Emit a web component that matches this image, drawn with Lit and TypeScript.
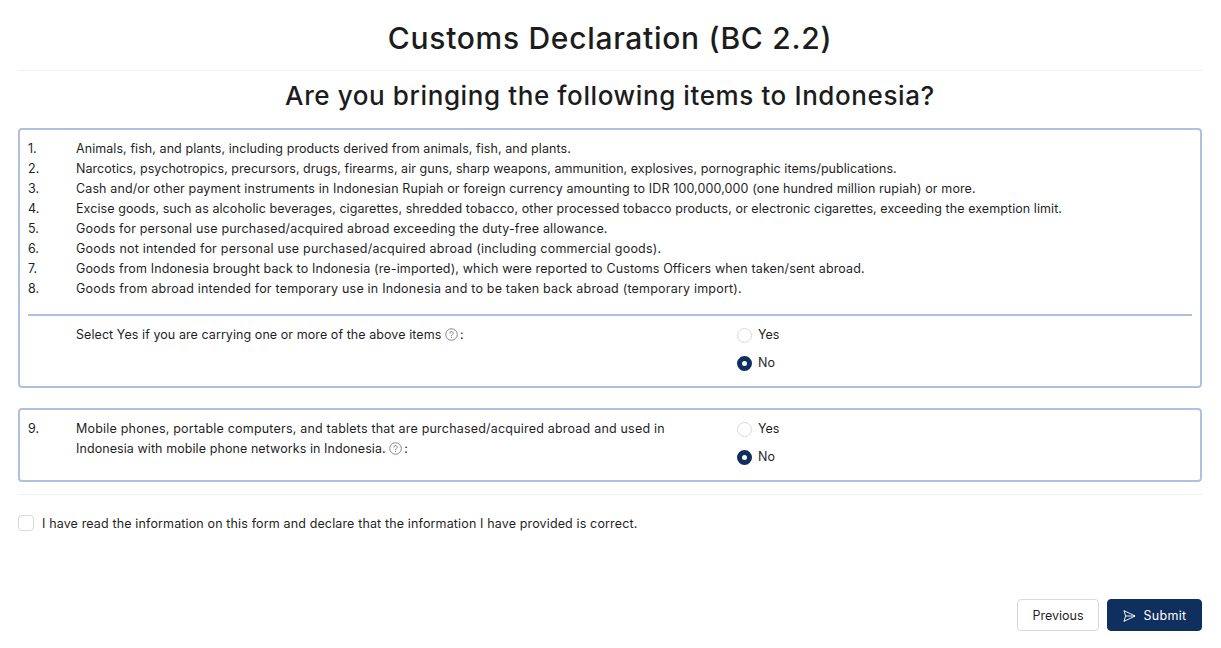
import { LitElement, html, css } from "lit";
import { customElement } from "lit/decorators.js";

const ITEMS: [string, number][] = [
  ["Animals, fish, and plants, including products derived from animals, fish, and plants.", 0.07],
  ["Narcotics, psychotropics, precursors, drugs, firearms, air guns, sharp weapons, ammunition, explosives, pornographic items/publications.", 0.044],
  ["Cash and/or other payment instruments in Indonesian Rupiah or foreign currency amounting to IDR 100,000,000 (one hundred million rupiah) or more.", 0.117],
  ["Excise goods, such as alcoholic beverages, cigarettes, shredded tobacco, other processed tobacco products, or electronic cigarettes, exceeding the exemption limit.", 0.073],
  ["Goods for personal use purchased/acquired abroad exceeding the duty-free allowance.", 0.17],
  ["Goods not intended for personal use purchased/acquired abroad (including commercial goods).", 0.22],
  ["Goods from Indonesia brought back to Indonesia (re-imported), which were reported to Customs Officers when taken/sent abroad.", 0.136],
  ["Goods from abroad intended for temporary use in Indonesia and to be taken back abroad (temporary import).", 0.2],
];

const help = html`<svg class="help" viewBox="0 0 14 14" fill="none" stroke="#7f7f7f" stroke-width="1">
  <circle cx="7" cy="7" r="6.2"></circle>
  <path d="M5.2 5.6a1.8 1.8 0 1 1 2.7 1.5c-.6.4-.9.7-.9 1.4" stroke-linecap="round"></path>
  <circle cx="7" cy="10.2" r=".6" fill="#7f7f7f" stroke="none"></circle>
</svg>`;

const radios = html`<div class="radios">
  <label class="radio"><span class="dot"></span>Yes</label>
  <label class="radio"><span class="dot on"></span>No</label>
</div>`;

@customElement("app-root")
export class AppRoot extends LitElement {
  static styles = css`
    :host {
      display: block;
      font-family: Inter, "Liberation Sans", sans-serif;
      font-size: 12.5px;
      line-height: 20px;
      color: #1f1f1f;
      background: #fff;
    }
    .page {
      display: flex;
      flex-direction: column;
      padding: 0 19px 17px 18px;
      height: 648px;
      box-sizing: border-box;
    }
    h1 {
      margin: 0;
      height: 70px;
      line-height: 76px;
      font-size: 30px;
      font-weight: 500;
      text-align: center;
      letter-spacing: 0.7px;
      color: #1c1c1c;
      border-bottom: 1px solid #f0f0f0;
    }
    h2 {
      margin: 0;
      height: 57px;
      line-height: 49px;
      font-size: 26px;
      font-weight: 500;
      text-align: center;
      letter-spacing: 0.6px;
      color: #1c1c1c;
    }
    .box {
      border: 2px solid #b0c0e0;
      border-radius: 4px;
      padding: 9px 8px 13px;
    }
    .q2 {
      margin-top: 20px;
    }
    .row {
      display: grid;
      grid-template-columns: 48px 1fr;
    }
    .sep {
      border: 0;
      border-top: 2px solid #b0c0e0;
      margin: 15px 0 9px;
    }
    .answer {
      display: grid;
      grid-template-columns: 48px 660px 1fr;
    }
    .select { letter-spacing: 0.07px; }
    .wide { letter-spacing: 0.2px; }
    .tight { letter-spacing: 0.08px; }
    .radios {
      display: flex;
      flex-direction: column;
      gap: 8px;
    }
    .radio {
      display: flex;
      align-items: center;
      gap: 6px;
      height: 20px;
    }
    .dot {
      width: 15px;
      height: 15px;
      margin-left: 1px;
      box-sizing: border-box;
      border: 1px solid #d9d9d9;
      border-radius: 50%;
      background: #fff;
    }
    .dot.on {
      border: 5px solid #0f2f5f;
    }
    .help {
      width: 13px;
      height: 13px;
      vertical-align: -2px;
      margin-right: 2px;
    }
    .rule {
      border: 0;
      border-top: 1px solid #f0f0f0;
      margin: 12px 0 0;
    }
    .agree {
      display: flex;
      gap: 8px;
      margin-top: 19px;
      letter-spacing: 0.14px;
    }
    .check {
      width: 16px;
      height: 16px;
      margin-top: 1px;
      box-sizing: border-box;
      border: 1px solid #d9d9d9;
      border-radius: 4px;
    }
    .actions {
      margin-top: auto;
      display: flex;
      justify-content: flex-end;
      gap: 8px;
    }
    button {
      height: 32px;
      padding: 1px 0 0;
      font: inherit;
      border-radius: 4px;
      box-sizing: border-box;
      display: flex;
      align-items: center;
      justify-content: center;
    }
    .prev {
      width: 82px;
      background: #fff;
      border: 1px solid #d9d9d9;
      color: #1f1f1f;
    }
    .submit {
      width: 95px;
      gap: 8px;
      background: #0f2f5f;
      border: 1px solid #0f2f5f;
      color: #fff;
      letter-spacing: 0.3px;
    }
    .submit svg {
      width: 13px;
      height: 14px;
    }
  `;

  render() {
    return html`<div class="page">
      <h1>Customs Declaration (BC 2.2)</h1>
      <h2>Are you bringing the following items to Indonesia?</h2>
      <section class="box">
        ${ITEMS.map(
          ([t, track], i) => html`<div class="row"><span>${i + 1}.</span><span style="letter-spacing:${track}px">${t}</span></div>`,
        )}
        <hr class="sep" />
        <div class="answer">
          <span></span>
          <span class="select">Select Yes if you are carrying one or more of the above items ${help}:</span>
          ${radios}
        </div>
      </section>
      <section class="box q2">
        <div class="answer">
          <span>9.</span>
          <span><span class="wide">Mobile phones, portable computers, and tablets that are purchased/acquired abroad and used in</span><br /><span class="tight">Indonesia with mobile phone networks in Indonesia. ${help}:</span></span>
          ${radios}
        </div>
      </section>
      <hr class="rule" />
      <label class="agree"><span class="check"></span>I have read the information on this form and declare that the information I have provided is correct.</label>
      <div class="actions">
        <button class="prev">Previous</button>
        <button class="submit">
          <svg viewBox="0 0 14 14" fill="none" stroke="#fff" stroke-width="1" stroke-linejoin="round">
            <path d="M1 1.2 13 7 1 12.8 2.8 7Z"></path>
            <path d="M2.8 7H13"></path>
          </svg>
          Submit
        </button>
      </div>
    </div>`;
  }
}
